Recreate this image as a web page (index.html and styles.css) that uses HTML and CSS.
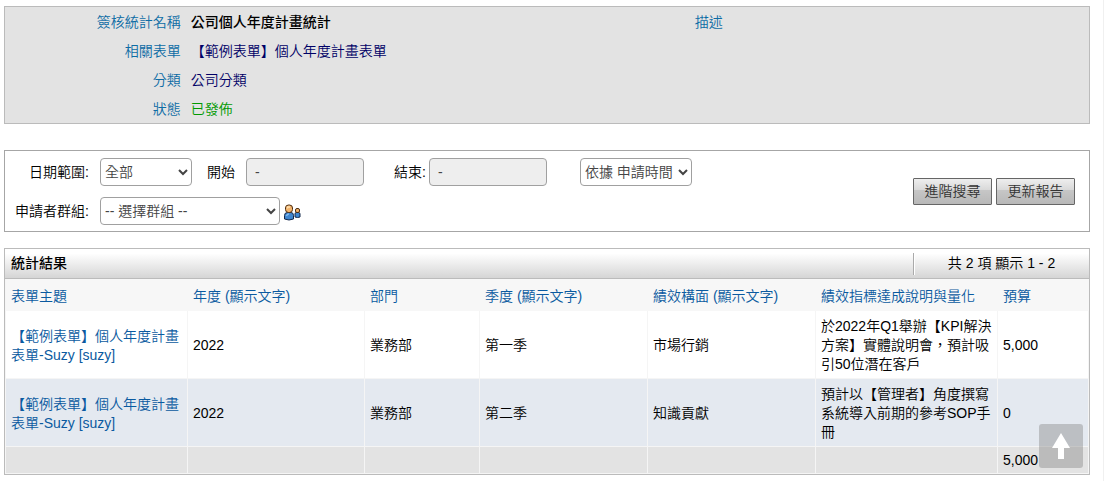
FILE: index.html
```html
<!DOCTYPE html>
<html lang="zh-Hant">
<head>
<meta charset="utf-8">
<title>公司個人年度計畫統計</title>
<link rel="stylesheet" href="styles.css">
</head>
<body>
<main class="page">
  <section class="info">
    <dl class="info-list">
      <div class="info-row"><dt>簽核統計名稱</dt><dd class="name">公司個人年度計畫統計</dd></div>
      <div class="info-row"><dt>相關表單</dt><dd>【範例表單】個人年度計畫表單</dd></div>
      <div class="info-row"><dt>分類</dt><dd>公司分類</dd></div>
      <div class="info-row"><dt>狀態</dt><dd class="published">已發佈</dd></div>
    </dl>
    <dl class="info-list">
      <div class="info-row"><dt>描述</dt><dd></dd></div>
    </dl>
  </section>

  <form class="filter">
    <div class="filter-fields">
      <div class="filter-row">
        <label class="lead" for="range">日期範圍:</label>
        <select id="range" class="range"><option>全部</option></select>
        <label class="start-label" for="start">開始</label>
        <input id="start" class="date" type="text" value="-" readonly>
        <label class="end-label" for="end">結束:</label>
        <input id="end" class="date" type="text" value="-" readonly>
        <select class="basis" aria-label="依據"><option>依據 申請時間</option></select>
      </div>
      <div class="filter-row">
        <label class="lead" for="group">申請者群組:</label>
        <select id="group" class="group"><option>-- 選擇群組 --</option></select>
        <button type="button" class="people" aria-label="選擇群組">
          <svg width="18" height="18" viewBox="0 0 18 18">
            <path d="M1.500 16V12.500Q1.500 9.500 4.500 9.500H8Q10.500 9.500 10.500 12.500V16Q6 18 1.500 16Z" fill="#3f86cf" stroke="#14284a"/>
            <path d="M3.500 13Q4 11 6 11" fill="none" stroke="#86bdf0" stroke-width="1.500"/>
            <rect x="2.500" y="2" width="7" height="7.500" rx="3" fill="#f2b36c" stroke="#4c2c10"/>
            <path d="M4.500 5.500V4H7" fill="none" stroke="#ffdfae" stroke-width="1.500"/>
            <path d="M12 14V11Q12 9.500 13 9.500H15.500Q17 9.500 17 11V14Q14.500 15 12 14Z" fill="#3f86cf" stroke="#14284a"/>
            <rect x="12.500" y="5.500" width="4" height="4" rx="1.500" fill="#f2b36c" stroke="#4c2c10"/>
          </svg>
        </button>
      </div>
    </div>
    <div class="actions">
      <button type="button" class="action">進階搜尋</button>
      <button type="button" class="action">更新報告</button>
    </div>
  </form>

  <section class="results">
    <header class="results-bar">
      <h2>統計結果</h2>
      <p class="count">共 2 項 顯示 1 - 2</p>
    </header>
    <table class="grid">
      <colgroup>
        <col class="c-subject"><col class="c-year"><col class="c-dept"><col class="c-season"><col class="c-aspect"><col class="c-desc"><col class="c-budget">
      </colgroup>
      <thead>
        <tr>
          <th><a href="#">表單主題</a></th>
          <th><a href="#">年度 (顯示文字)</a></th>
          <th><a href="#">部門</a></th>
          <th><a href="#">季度 (顯示文字)</a></th>
          <th><a href="#">績效構面 (顯示文字)</a></th>
          <th><a href="#">績效指標達成說明與量化</a></th>
          <th><a href="#">預算</a></th>
        </tr>
      </thead>
      <tbody>
        <tr>
          <td><a href="#">【範例表單】個人年度計畫表單-Suzy [suzy]</a></td>
          <td>2022</td>
          <td>業務部</td>
          <td>第一季</td>
          <td>市場行銷</td>
          <td>於2022年Q1舉辦【KPI解決方案】實體說明會，預計吸引50位潛在客戶</td>
          <td>5,000</td>
        </tr>
        <tr class="alt">
          <td><a href="#">【範例表單】個人年度計畫表單-Suzy [suzy]</a></td>
          <td>2022</td>
          <td>業務部</td>
          <td>第二季</td>
          <td>知識貢獻</td>
          <td>預計以【管理者】角度撰寫系統導入前期的參考SOP手冊</td>
          <td>0</td>
        </tr>
      </tbody>
      <tfoot>
        <tr><td></td><td></td><td></td><td></td><td></td><td></td><td>5,000</td></tr>
      </tfoot>
    </table>
  </section>
</main>
<a class="to-top" href="#" aria-label="回到頂端">
  <svg width="20" height="26" viewBox="0 0 20 26"><path d="M10 0L19 15H13V26H7V15H1Z" fill="#fff"/></svg>
</a>
</body>
</html>
```

FILE: styles.css
```css
* {
  box-sizing: border-box;
}

html {
  border-right: 1px solid #f0f0f0;
  min-height: 100%;
}

body {
  margin: 0;
  background: #fff;
  color: #000;
  font: 350 14px/19px "Liberation Sans", "Noto Sans CJK TC", sans-serif;
  text-spacing-trim: space-all;
}

select,
input,
button {
  margin: 0;
  font: inherit;
}

a {
  color: #0a5aa0;
  text-decoration: none;
}

.page {
  padding: 6px 13px 6px 4px;
}

/* Summary */
.info {
  display: grid;
  grid-template-columns: 1fr 1fr;
  background: #e3e3e3;
  border: 1px solid #bbb;
}

.info-list {
  margin: 0;
}

.info-row {
  display: grid;
  grid-template-columns: 1fr 2fr;
}

.info-row dt,
.info-row dd {
  margin: 0;
  padding: 6px 5px 4px;
}

.info-row dt {
  color: #0d6ca5;
  text-align: right;
}

.info-row dd {
  color: #006;
}

.info-row .name {
  color: #000;
  font-weight: 500;
}

.info-row .published {
  color: #090;
}

/* Filter */
.filter {
  display: flex;
  align-items: center;
  justify-content: space-between;
  margin-top: 26px;
  padding: 7px 14px 6px 0;
  border: 1px solid #a6a6a6;
}

.filter-fields {
  display: grid;
  gap: 11px;
}

.filter-row {
  display: flex;
  align-items: center;
}

.filter-row label {
  white-space: nowrap;
}

.lead {
  width: 84px;
  margin-right: 11px;
  text-align: right;
}

.filter select,
.date {
  height: 28px;
  border: 1px solid #a0a0a0;
  border-radius: 4px;
  background: #fff;
  color: #444;
}

.filter .date {
  width: 118px;
  padding: 0 8px;
  background: #eee;
}

.range {
  width: 92px;
}

.basis {
  width: 112px;
  margin-left: 33px;
}

.group {
  width: 180px;
}

.start-label {
  margin: 0 11px 0 15px;
}

.end-label {
  margin: 0 3px 0 30px;
}

.people {
  display: flex;
  margin-left: 3px;
  padding: 2px 0 0;
  border: 0;
  background: none;
}

.actions {
  display: flex;
  gap: 4px;
}

.action {
  width: 79px;
  height: 27px;
  padding: 0;
  border: 1px solid #666;
  border-radius: 1px;
  background: linear-gradient(#eee, #d8d8d8 45%, #c6c6c6 46%, #b8b8b8);
  color: #333;
  white-space: nowrap;
}

/* Results */
.results {
  margin-top: 16px;
  border: 1px solid #bbb;
}

.results-bar {
  display: flex;
  align-items: center;
  justify-content: space-between;
  height: 30px;
  padding-left: 6px;
  border-bottom: 1px solid #bbb;
  background: linear-gradient(#fff 15%, #d5d5d5);
}

.results-bar h2 {
  margin: 0;
  font-size: 14px;
  font-weight: 500;
}

.count {
  width: 176px;
  margin: 0;
  padding: 1px 0 2px;
  border-left: 1px solid #aaa;
  box-shadow: inset 1px 0 #fff;
  text-align: center;
}

.grid {
  width: 100%;
  table-layout: fixed;
  border-collapse: separate;
  border-spacing: 0;
}

.c-subject { width: 183px; }
.c-year { width: 177px; }
.c-dept { width: 115px; }
.c-season { width: 168px; }
.c-aspect { width: 168px; }
.c-desc { width: 182px; }
.c-budget { width: 91px; }

.grid th,
.grid td {
  padding: 6px 4px 4px 5px;
  border-right: 1px solid #f5f5f5;
  border-bottom: 1px solid #f5f5f5;
  text-align: left;
  vertical-align: middle;
}

.grid th:first-child,
.grid td:first-child {
  border-left: 1px solid #f5f5f5;
}

.grid th {
  padding-top: 8px;
  border-color: #f7f7f7;
  background: #f7f7f7;
  font-weight: inherit;
}

.grid .alt td {
  background: #e4e9f0;
}

.grid tfoot td {
  padding-top: 4px;
  padding-bottom: 3px;
  background: #e3e3e3;
}

.to-top {
  position: fixed;
  right: 21px;
  bottom: 13px;
  display: flex;
  align-items: center;
  justify-content: center;
  width: 44px;
  height: 44px;
  border-radius: 3px;
  background: rgba(128, 128, 128, 0.4);
}
```
